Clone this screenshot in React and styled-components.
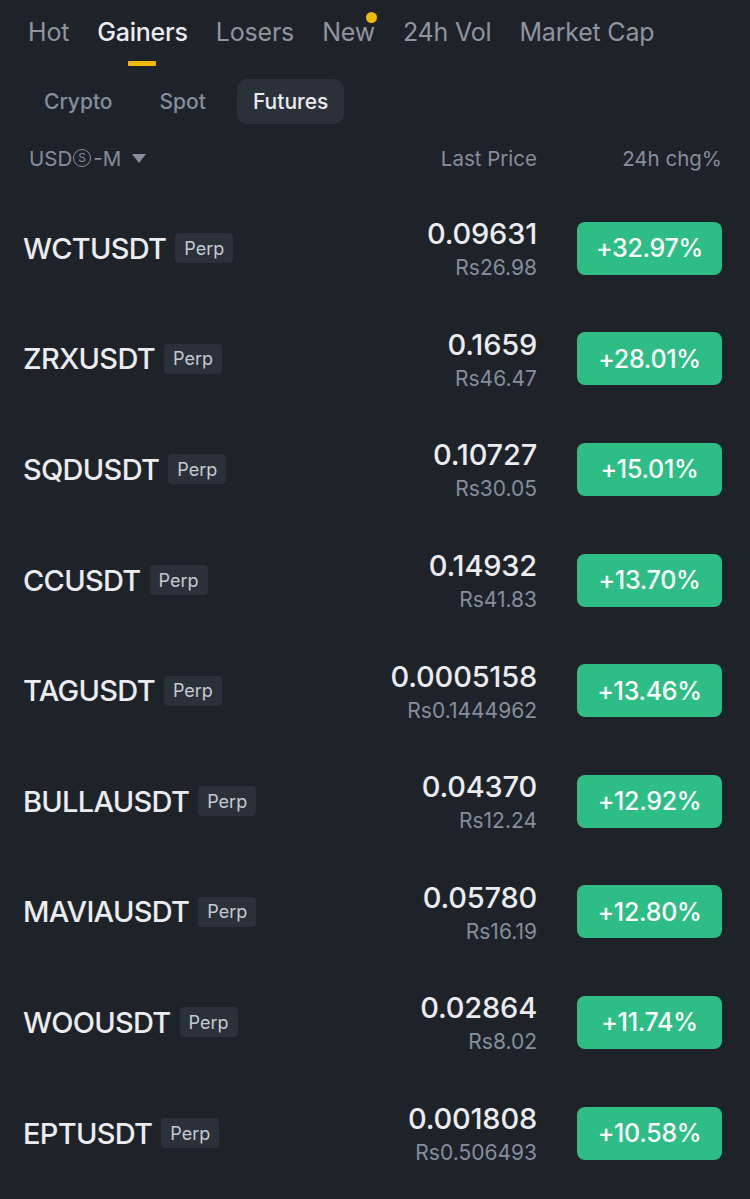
import React from "react";
import styled, { createGlobalStyle } from "styled-components";

const Global = createGlobalStyle`
  html, body { margin: 0; padding: 0; background: #1e2329; }
  body { font-family: Inter, "Liberation Sans", sans-serif; -webkit-font-smoothing: antialiased; }
  * { box-sizing: border-box; }
`;

const Page = styled.div`
  width: 750px;
  min-height: 1199px;
  background: #1e2329;
  overflow: hidden;
`;

const TabBar = styled.nav`
  display: flex;
  gap: 28px;
  padding: 12px 0 0 28px;
`;

const Tab = styled.div`
  position: relative;
  display: flex;
  flex-direction: column;
  align-items: center;
  font-size: 25px;
  line-height: 40px;
  letter-spacing: -0.2px;
  font-weight: ${p => (p.$active ? 500 : 400)};
  color: ${p => (p.$active ? "#eaecef" : "#8e959f")};
  white-space: nowrap;
`;

const Underline = styled.span`
  margin-top: 9px;
  width: 28px;
  height: 5px;
  border-radius: 1px;
  background: ${p => (p.$show ? "#f0b90b" : "transparent")};
`;

const Dot = styled.span`
  position: absolute;
  top: 0px;
  right: -2px;
  width: 11px;
  height: 11px;
  border-radius: 50%;
  background: #f0b90b;
`;

const SubTabs = styled.div`
  display: flex;
  gap: 15px;
  padding: 13px 0 0 28px;
`;

const SubTab = styled.div`
  height: 45px;
  padding: 0 16px;
  border-radius: 10px;
  display: flex;
  align-items: center;
  font-size: 21px;
  font-weight: 500;
  color: ${p => (p.$active ? "#eaecef" : "#848e9c")};
  background: ${p => (p.$active ? "#2b3139" : "transparent")};
`;

const HeaderRow = styled.div`
  display: flex;
  align-items: center;
  height: 34px;
  margin-top: 17px;
  padding: 0 28px 0 29px;
  font-size: 20.5px;
  color: #848e9c;
`;

const Market = styled.div`
  flex: 1;
  display: flex;
  align-items: center;
  gap: 11px;
`;

const MarketLabel = styled.span`
  display: flex;
  align-items: center;
`;

const Circled = styled.span`
  display: flex;
  align-items: center;
  justify-content: center;
  width: 18px;
  height: 18px;
  margin: 0 2px 0 1px;
  border: 1.5px solid #848e9c;
  border-radius: 50%;
  font-size: 12px;
  line-height: 1;
`;

const Caret = styled.span`
  width: 0;
  height: 0;
  border-left: 7px solid transparent;
  border-right: 7px solid transparent;
  border-top: 9px solid #848e9c;
`;

const HeadCell = styled.div`
  text-align: right;
  width: ${p => p.$w}px;
`;

const List = styled.div`
  padding-top: 18px;
`;

const Row = styled.div`
  height: 110.6px;
  display: flex;
  align-items: center;
  padding: 0 28px 0 23px;
`;

const Symbol = styled.div`
  flex: 1;
  display: flex;
  align-items: center;
  gap: 9px;
`;

const Name = styled.span`
  font-size: 29px;
  font-weight: 500;
  color: #eaecef;
  letter-spacing: -0.7px;
`;

const Badge = styled.span`
  height: 30px;
  padding: 0 9px;
  display: flex;
  align-items: center;
  border-radius: 4px;
  background: #2b3139;
  color: #c5cad2;
  font-size: 18px;
`;

const Price = styled.div`
  display: flex;
  flex-direction: column;
  align-items: flex-end;
  margin-right: 40px;
  margin-top: 8px;
`;

const Last = styled.span`
  font-size: 29px;
  font-weight: 500;
  line-height: 32px;
  letter-spacing: -0.2px;
  color: #eaecef;
`;

const Fiat = styled.span`
  font-size: 21px;
  line-height: 36px;
  color: #848e9c;
`;

const Change = styled.div`
  width: 145px;
  height: 53px;
  border-radius: 8px;
  background: #2ebd85;
  color: #ffffff;
  font-size: 25px;
  font-weight: 500;
  letter-spacing: -0.3px;
  display: flex;
  align-items: center;
  justify-content: center;
`;

const tabs = ["Hot", "Gainers", "Losers", "New", "24h Vol", "Market Cap"];

const rows = [
  ["WCTUSDT", "0.09631", "Rs26.98", "+32.97%"],
  ["ZRXUSDT", "0.1659", "Rs46.47", "+28.01%"],
  ["SQDUSDT", "0.10727", "Rs30.05", "+15.01%"],
  ["CCUSDT", "0.14932", "Rs41.83", "+13.70%"],
  ["TAGUSDT", "0.0005158", "Rs0.1444962", "+13.46%"],
  ["BULLAUSDT", "0.04370", "Rs12.24", "+12.92%"],
  ["MAVIAUSDT", "0.05780", "Rs16.19", "+12.80%"],
  ["WOOUSDT", "0.02864", "Rs8.02", "+11.74%"],
  ["EPTUSDT", "0.001808", "Rs0.506493", "+10.58%"],
];

export default function App() {
  return (
    <Page>
      <Global />
      <TabBar>
        {tabs.map(t => (
          <Tab key={t} $active={t === "Gainers"}>
            {t}
            {t === "New" && <Dot />}
            <Underline $show={t === "Gainers"} />
          </Tab>
        ))}
      </TabBar>
      <SubTabs>
        <SubTab>Crypto</SubTab>
        <SubTab>Spot</SubTab>
        <SubTab $active>Futures</SubTab>
      </SubTabs>
      <HeaderRow>
        <Market>
          <MarketLabel>
            USD<Circled>S</Circled>-M
          </MarketLabel>
          <Caret />
        </Market>
        <HeadCell $w={140}>Last Price</HeadCell>
        <HeadCell $w={185}>24h chg%</HeadCell>
      </HeaderRow>
      <List>
        {rows.map(([s, p, f, c]) => (
          <Row key={s}>
            <Symbol>
              <Name>{s}</Name>
              <Badge>Perp</Badge>
            </Symbol>
            <Price>
              <Last>{p}</Last>
              <Fiat>{f}</Fiat>
            </Price>
            <Change>{c}</Change>
          </Row>
        ))}
      </List>
    </Page>
  );
}
